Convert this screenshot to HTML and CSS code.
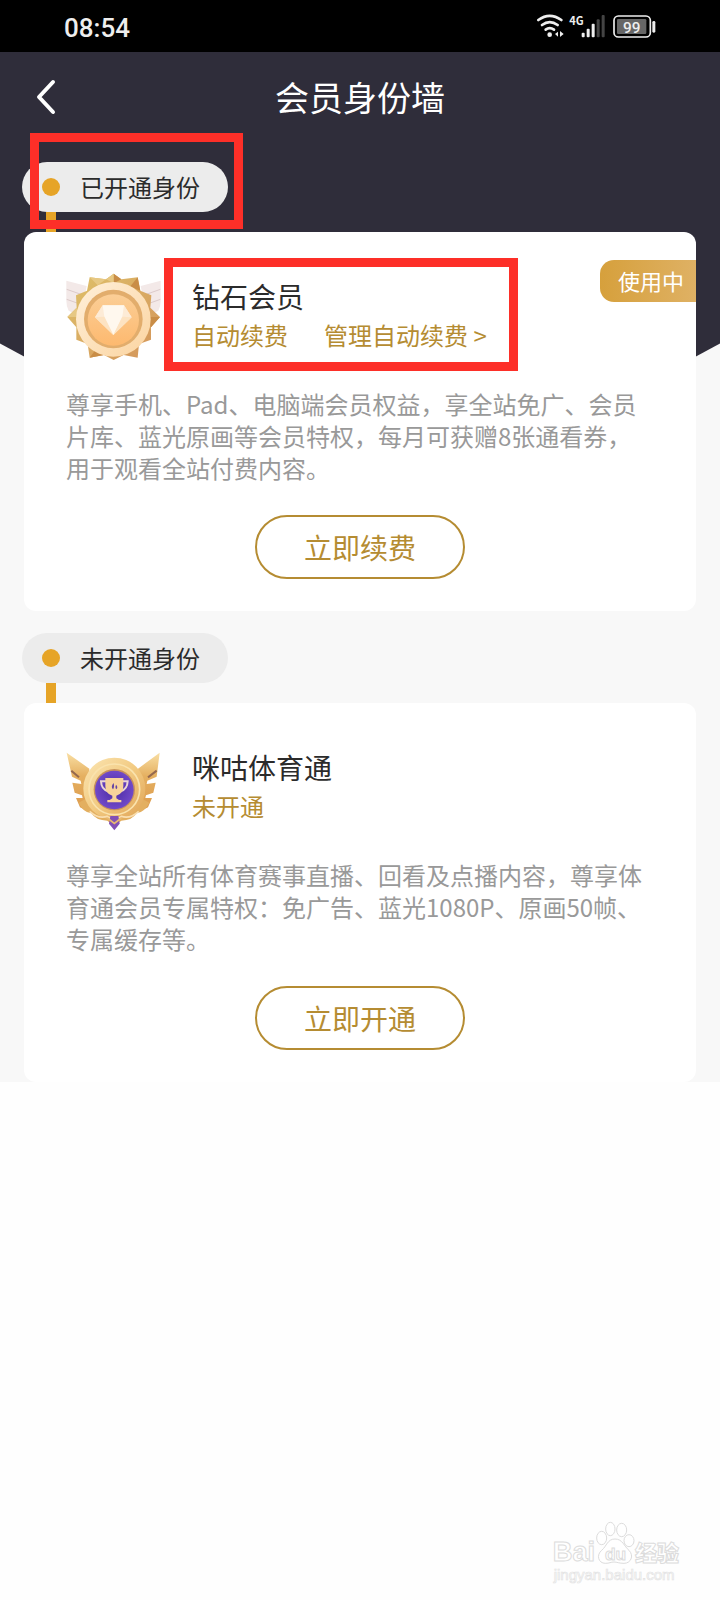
FILE: index.html
```html
<!DOCTYPE html>
<html lang="zh-CN">

<head>
    <meta charset="UTF-8">
    <meta name="viewport" content="width=device-width, initial-scale=1.0">
    <title>会员身份墙</title>
    <link rel="stylesheet" href="styles.css">
</head>

<body>
    <div class="status-bar">
        <span class="time">08:54</span>
        <svg class="status-icons" viewBox="105 38 372 78" aria-hidden="true">
            <!-- wifi -->
            <g fill="none" stroke="#eee" stroke-width="8" stroke-linecap="round">
                <path d="M115 59 Q149 34 184 59" />
                <path d="M126 74 Q149 57 173 74" />
                <path d="M137 88 Q149 79 162 88" />
            </g>
            <circle cx="149" cy="103" r="7" fill="#eee" />
            <path d="M174 94 V109 L165 101 Z M180 92 V110 L191 101 Z" fill="#eee" />
            <!-- signal -->
            <text x="208" y="73" class="net">4G</text>
            <g fill="#eee">
                <rect x="245" y="97" width="9" height="14" rx="3" />
                <rect x="260" y="85" width="9" height="26" rx="3" />
                <rect x="275" y="70" width="9" height="41" rx="3" />
            </g>
            <g fill="#444">
                <rect x="290" y="57" width="9" height="54" rx="3" />
                <rect x="305" y="44" width="9" height="67" rx="3" />
            </g>
            <!-- battery -->
            <rect x="342" y="47" width="109" height="63" rx="13" fill="none" stroke="#eee" stroke-width="5" />
            <rect x="351" y="56" width="88" height="45" rx="4" fill="#666" />
            <rect x="457" y="62" width="9" height="35" rx="4" fill="#eee" />
            <text x="395" y="97" class="level">99</text>
        </svg>
    </div>

    <main class="wall">
        <header class="nav">
            <button class="back" type="button" aria-label="返回">
                <svg viewBox="0 0 24 40" aria-hidden="true">
                    <path d="M19 5 L5 20 L19 35" />
                </svg>
            </button>
            <h1>会员身份墙</h1>
        </header>

        <section class="group">
            <h2 class="pill"><i class="dot"></i>已开通身份</h2>
            <div class="stem"></div>
            <article class="card">
                <span class="badge">使用中</span>
                <div class="card-head">
                    <svg class="medal" viewBox="48 36 288 276" aria-hidden="true">
                        <defs>
                            <linearGradient id="ring" x1="0" y1="0" x2="1" y2="1">
                                <stop offset="0" stop-color="#fff0da" />
                                <stop offset="1" stop-color="#fbd4a0" />
                            </linearGradient>
                            <linearGradient id="disc" x1="0" y1="0" x2="0" y2="1">
                                <stop offset="0" stop-color="#fbce96" />
                                <stop offset="1" stop-color="#fdb96f" />
                            </linearGradient>
                            <linearGradient id="spike" x1="0" y1="0" x2="1" y2="1">
                                <stop offset="0" stop-color="#dfc26a" />
                                <stop offset="1" stop-color="#d3935a" />
                            </linearGradient>
                        </defs>
                        <path d="M49 62 L110 78 L92 170 L56 152 Q49 140 49 122 Z M332 62 L272 78 L290 170 L325 152 Q332 140 332 122 Z" fill="#f3e9e8" />
                        <path d="M50 88 L96 104 M50 118 L90 132 M331 88 L286 104 M331 118 L292 132" stroke="#dccaca" stroke-width="3" />
                        <path d="M191 41 L214 58 L263 52 L271 92 L304 106 L301 143 L330 171 L303 202 L303 239 L267 252 L263 293 L221 285 L191 300 L162 285 L119 293 L113 252 L79 239 L79 202 L52 171 L80 143 L78 106 L111 92 L119 52 L168 58 Z" fill="url(#spike)" />
                        <path d="M191 41 L191 70 L214 58 Z M263 52 L240 80 L271 92 Z M330 171 L290 171 L303 202 Z M119 293 L140 265 L162 285 Z" fill="#c98d47" />
                        <path d="M119 52 L143 76 L168 58 Z M191 41 L168 58 L191 70 Z M52 171 L92 171 L80 143 Z" fill="#e7c883" />
                        <circle cx="190" cy="178" r="112" fill="url(#ring)" />
                        <circle cx="190" cy="177" r="88" fill="#e2ad6c" />
                        <circle cx="190" cy="180" r="77" fill="url(#disc)" />
                        <path d="M158 136 H222 L245 172 L190 225 L135 172 Z" fill="#fdebd2" />
                        <path d="M158 136 L163 170 L135 172 Z M222 136 L217 170 L245 172 Z" fill="#fdebd6" />
                        <path d="M158 136 H222 L217 170 L190 225 L163 170 Z" fill="#fff8ee" />
                        <path d="M163 170 L190 225 L135 172 Z M217 170 L190 225 L245 172 Z" fill="#fde3c2" />
                    </svg>
                    <div class="info">
                        <h3>钻石会员</h3>
                        <p class="state">
                            <span>自动续费</span>
                            <a href="#renew">管理自动续费 &gt;</a>
                        </p>
                    </div>
                </div>
                <p class="desc">尊享手机、Pad、电脑端会员权益，享全站免广、会员片库、蓝光原画等会员特权，每月可获赠8张通看券，用于观看全站付费内容。</p>
                <button class="action" type="button">立即续费</button>
                <div class="mark mark-member"></div>
            </article>
            <div class="mark mark-opened"></div>
        </section>

        <section class="group">
            <h2 class="pill"><i class="dot"></i>未开通身份</h2>
            <div class="stem"></div>
            <article class="card">
                <div class="card-head">
                    <svg class="medal" viewBox="48 21 288 276" aria-hidden="true">
                        <defs>
                            <linearGradient id="wing" x1="0" y1="0" x2="0" y2="1">
                                <stop offset="0" stop-color="#f9dfa4" />
                                <stop offset="0.4" stop-color="#e5b061" />
                                <stop offset="1" stop-color="#dc9a4c" />
                            </linearGradient>
                            <linearGradient id="gold" x1="0" y1="0" x2="1" y2="1">
                                <stop offset="0" stop-color="#fbe6b4" />
                                <stop offset="0.5" stop-color="#f2ca81" />
                                <stop offset="1" stop-color="#dfa255" />
                            </linearGradient>
                            <radialGradient id="violet">
                                <stop offset="0" stop-color="#4a2ba3" />
                                <stop offset="1" stop-color="#7149c8" />
                            </radialGradient>
                        </defs>
                        <path d="M50 50 L118 98 L112 225 L90 214 L78 186 L98 186 L96 178 L74 170 L67 140 L94 144 L92 134 L66 122 Z" fill="url(#wing)" />
                        <path d="M329 50 L264 98 L272 225 L294 214 L306 186 L286 186 L288 178 L310 170 L317 140 L290 144 L292 134 L320 122 Z" fill="url(#wing)" />
                        <path d="M64 104 L87 124 M320 104 L294 124" stroke="#95694f" stroke-width="6" />
                        <path d="M86 200 Q98 228 124 232 Q138 254 172 254 L193 270 L214 254 Q246 254 260 232 Q284 228 298 200 L260 180 H122 Z" fill="#e3af60" />
                        <circle cx="193" cy="158" r="93" fill="url(#gold)" />
                        <circle cx="193" cy="160" r="76" fill="none" stroke="#fae3ad" stroke-width="5" />
                        <circle cx="193" cy="161" r="62" fill="#c8925b" />
                        <circle cx="193" cy="162" r="58" fill="url(#violet)" />
                        <path d="M119 226 Q145 250 172 241 L193 255 L214 241 Q240 250 266 226" fill="none" stroke="#f9deb0" stroke-width="5" />
                        <path d="M181 240 H205 L209 263 L193 283 L177 263 Z" fill="#8250b6" />
                        <path d="M172 246 L193 262 L214 246" fill="none" stroke="#e8b970" stroke-width="5" />
                        <path d="M168 136 H153 Q154 160 174 166 M218 136 H233 Q232 160 212 166" fill="none" stroke="#ebd5d4" stroke-width="6" />
                        <path d="M166 126 H220 V150 Q220 174 199 179 V187 L207 192 H214 V199 H172 V192 H179 L187 187 V179 Q166 174 166 150 Z" fill="#f8d29a" />
                        <path d="M191 141 Q181 152 189 160 Q194 154 191 141 Z M198 146 Q206 154 198 160 Q194 154 198 146 Z" fill="#6444a4" />
                    </svg>
                    <div class="info">
                        <h3>咪咕体育通</h3>
                        <p class="state"><span>未开通</span></p>
                    </div>
                </div>
                <p class="desc">尊享全站所有体育赛事直播、回看及点播内容，尊享体育通会员专属特权：免广告、蓝光1080P、原画50帧、专属缓存等。</p>
                <button class="action" type="button">立即开通</button>
            </article>
        </section>
    </main>

    <footer class="watermark">
        <svg viewBox="65 60 390 195" role="img" aria-label="Baidu 经验">
            <g class="outline">
                <text x="67" y="184" class="brand">Bai</text>
                <path d="M254 117 C277 117 281 139 296 151 C312 168 301 190 281 190 C266 190 260 186 251 186 C241 186 238 190 225 190 C204 190 197 165 214 151 C229 139 231 117 254 117 Z" />
                <ellipse cx="214" cy="114" rx="15" ry="20" />
                <ellipse cx="240" cy="87" rx="14" ry="20" />
                <ellipse cx="274" cy="90" rx="15" ry="20" />
                <ellipse cx="296" cy="122" rx="15" ry="18" />
                <text x="224" y="179" class="du">du</text>
                <text x="314" y="182" class="exp">经验</text>
            </g>
            <text x="70" y="240" class="site">jingyan.baidu.com</text>
        </svg>
    </footer>
</body>

</html>
```

FILE: styles.css
```css
* {
    box-sizing: border-box;
}

body {
    font-family: "Noto Sans CJK SC", "Noto Sans", sans-serif;
    background-color: #fefefe;
    color: #2b2b2b;
    margin: 0;
    min-height: 100vh;
    display: flex;
    flex-direction: column;
}

h1,
h2,
h3,
p {
    margin: 0;
    font-weight: 400;
}

/* Status bar */
.status-bar {
    display: flex;
    align-items: center;
    justify-content: space-between;
    height: 52px;
    padding: 0 61px 0 64px;
    background-color: #000;
}

.time {
    font-family: Roboto, sans-serif;
    font-size: 26px;
    font-weight: 500;
    line-height: 32px;
    color: #eee;
    padding-top: 4px;
}

.status-icons {
    width: 124px;
    height: 26px;
}

.net {
    font: 700 33px "Noto Sans CJK SC", sans-serif;
    fill: #eee;
}

.level {
    font: 500 46px Roboto, sans-serif;
    fill: #eee;
    text-anchor: middle;
}

/* Page */
.wall {
    position: relative;
    z-index: 0;
    background-color: #f8f8f8;
    padding: 0 24px 0 22px;
}

/* dark backdrop that ends in a point behind the first card */
.wall::before {
    content: "";
    position: absolute;
    z-index: -1;
    top: 0;
    left: 0;
    right: 0;
    height: 486px;
    background-color: #2f2d3a;
    clip-path: polygon(0 0, 100% 0, 100% 60%, 50% 100%, 0 60%);
}

.nav {
    display: grid;
    grid-template-columns: 48px 1fr 46px;
    align-items: center;
    height: 90px;
    margin-bottom: 20px;
}

.nav h1 {
    grid-column: 2;
    text-align: center;
    font-size: 34px;
    line-height: 40px;
    color: #fff;
}

.back {
    background: none;
    border: none;
    padding: 0 0 0 12px;
    cursor: pointer;
}

.back svg {
    display: block;
    width: 24px;
    height: 40px;
    fill: none;
    stroke: #fff;
    stroke-width: 4;
    stroke-linecap: round;
    stroke-linejoin: round;
}

.group {
    position: relative;
}

.group + .group {
    padding-top: 22px;
}

.pill {
    display: flex;
    align-items: center;
    gap: 20px;
    width: fit-content;
    height: 50px;
    padding: 0 28px 0 20px;
    border-radius: 25px;
    background-color: #ececec;
    font-size: 24px;
    line-height: 32px;
}

.dot {
    width: 18px;
    height: 18px;
    border-radius: 50%;
    background-color: #e6a427;
}

.stem {
    width: 10px;
    height: 20px;
    margin-left: 24px;
    background-color: #e6a427;
}

/* Cards */
.card {
    position: relative;
    margin-left: 2px;
    padding: 40px 42px 32px;
    border-radius: 12px;
    background-color: #fff;
}

.card-head {
    display: flex;
    gap: 30px;
    margin-bottom: 24px;
}

.medal {
    width: 96px;
    height: 92px;
}

.info {
    padding-top: 4px;
}

.info h3 {
    font-size: 28px;
    line-height: 40px;
}

.state {
    display: flex;
    gap: 36px;
    font-size: 24px;
    line-height: 38px;
    color: #b58c32;
}

.state a {
    color: inherit;
    text-decoration: none;
}

.desc {
    font-size: 24px;
    line-height: 32px;
    color: #999;
}

.action {
    display: block;
    width: 210px;
    height: 64px;
    margin: 31px auto 0;
    border: 2px solid #b58c32;
    border-radius: 32px;
    background-color: transparent;
    font-family: inherit;
    font-size: 28px;
    color: #b58c32;
    cursor: pointer;
}

.badge {
    position: absolute;
    top: 28px;
    right: 0;
    padding: 4px 12px 6px 18px;
    border-radius: 14px 0 0 14px;
    background: linear-gradient(90deg, #d6a03c, #dfb164);
    font-size: 22px;
    line-height: 32px;
    color: #fff;
}

/* Red frames around the highlighted parts */
.mark {
    position: absolute;
    border: 9px solid #fd2f28;
    pointer-events: none;
}

.mark-opened {
    top: -29px;
    left: 8px;
    width: 213px;
    height: 96px;
}

.mark-member {
    top: 26px;
    left: 140px;
    width: 354px;
    height: 113px;
}

/* Watermark */
.watermark {
    display: flex;
    justify-content: flex-end;
    margin-top: auto;
    padding: 0 38px 15px;
}

.watermark svg {
    width: 130px;
    height: 65px;
}

.outline {
    fill: #fff;
    stroke: #dcdcdc;
    stroke-width: 3;
}

.brand {
    font: 700 82px "Liberation Sans", sans-serif;
}

.du {
    font: 700 52px "Liberation Sans", sans-serif;
}

.exp {
    font: 900 66px "Noto Sans CJK SC", sans-serif;
}

.site {
    font: 400 45px "Liberation Sans", sans-serif;
    fill: #fff;
    stroke: #e2e2e2;
    stroke-width: 2;
}
```
